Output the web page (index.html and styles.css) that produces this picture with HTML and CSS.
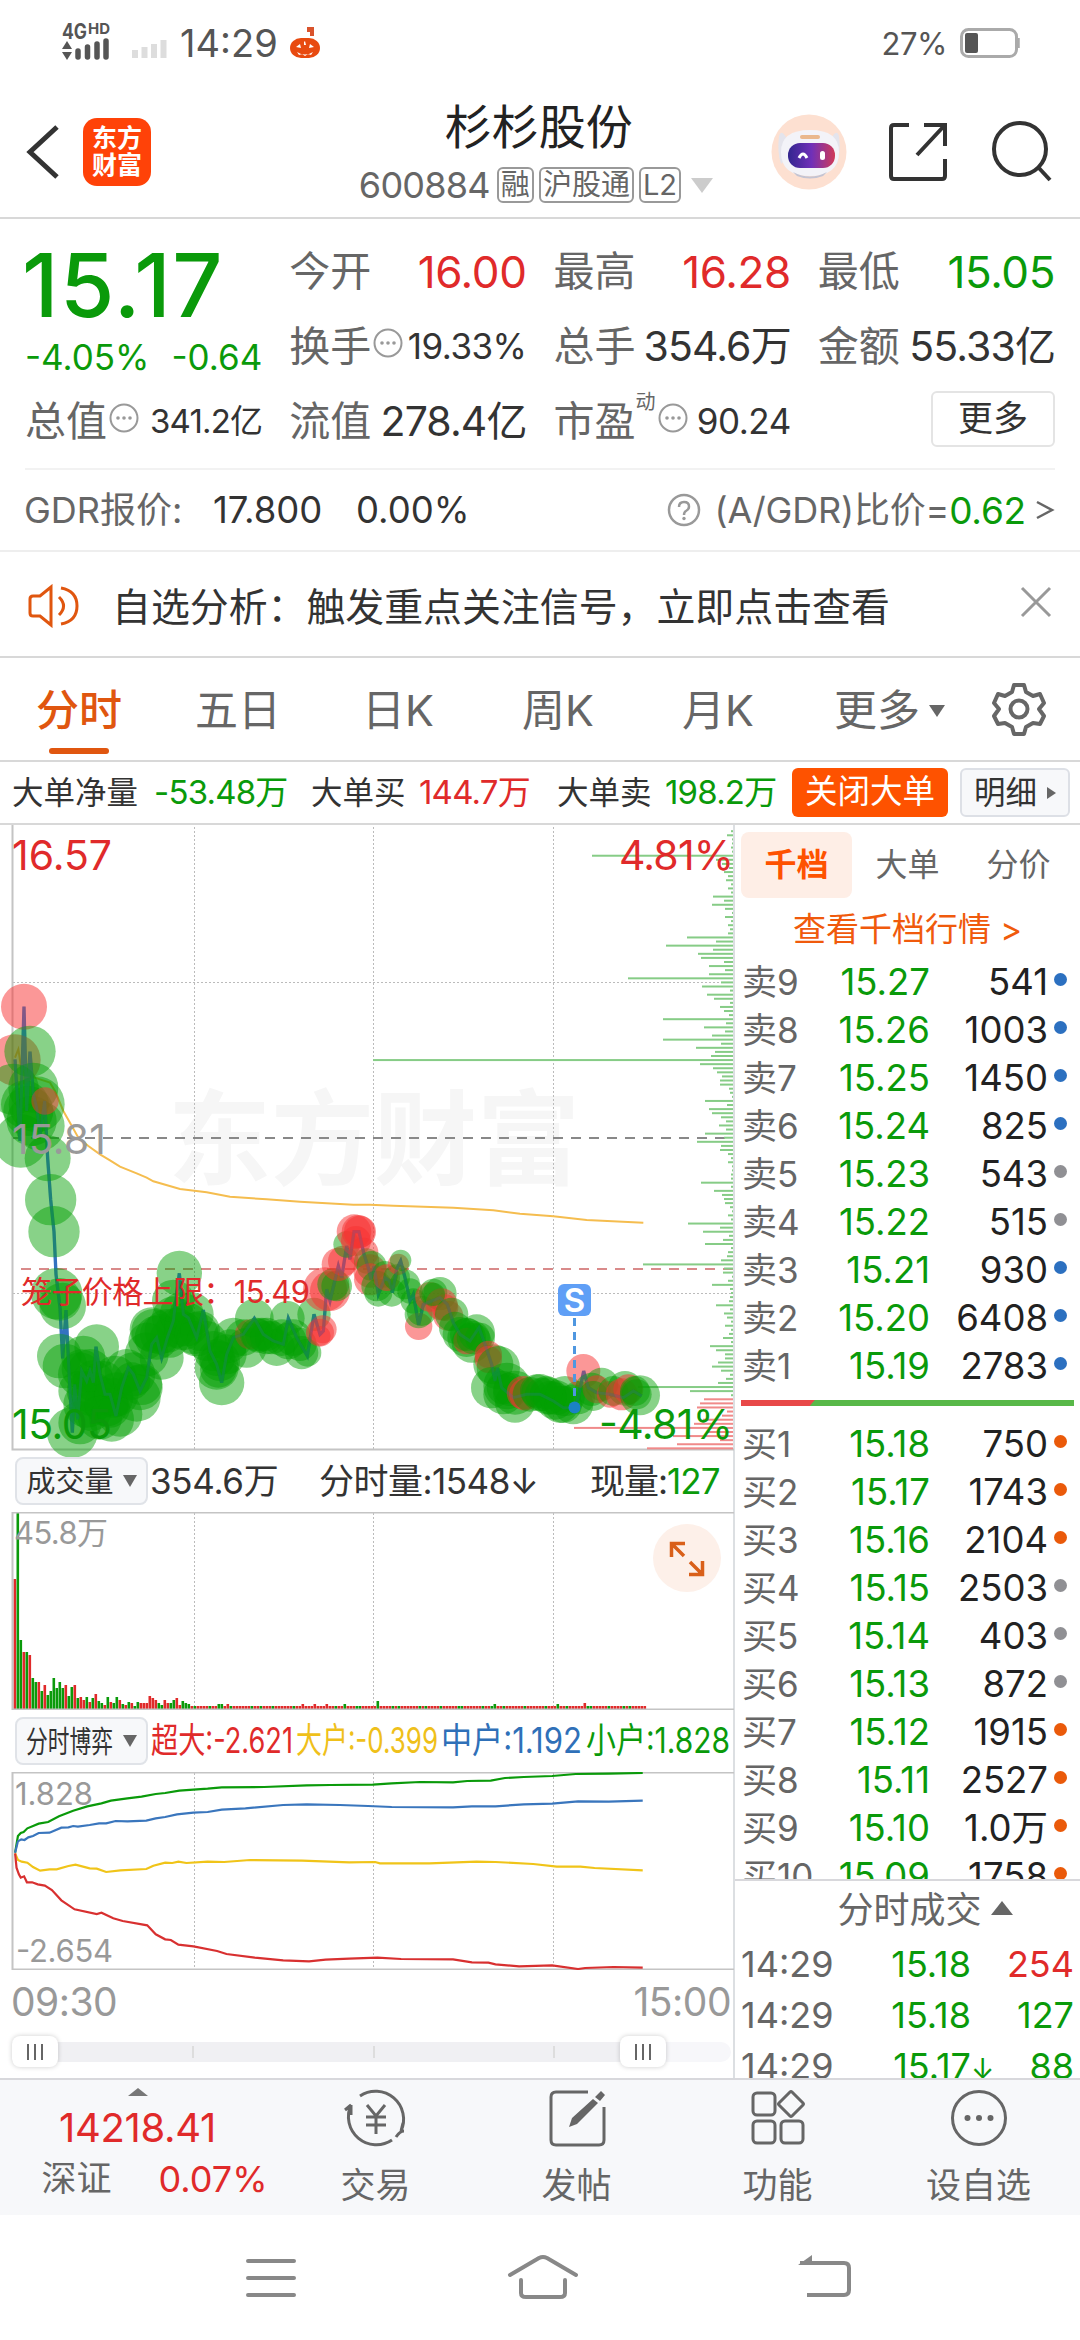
FILE: index.html
```
<!DOCTYPE html>
<html lang="zh-CN">
<head>
    <meta charset="UTF-8">
    <meta name="viewport" content="width=device-width, initial-scale=1.0">
    <title>杉杉股份 600884</title>
    <link rel="stylesheet" href="styles.css">
</head>
<body>
    <div class="status-bar">
        <svg class="signal" width="110" height="46" viewBox="0 0 110 46">
            <text x="0" y="19" font-size="21" font-weight="700" textLength="25" lengthAdjust="spacingAndGlyphs" fill="#555">4G</text>
            <text x="26" y="14" font-size="15" font-weight="700" textLength="22" lengthAdjust="spacingAndGlyphs" fill="#555">HD</text>
            <path d="M0 29l5-8 5 8zM0 32h10l-5 8z" fill="#555"/>
            <path d="M16 37v-6M25.500 37v-10M35 37v-13M44 37V21" stroke="#555" stroke-width="5.500" stroke-linecap="round"/>
            <path d="M73 38v-8M82.500 38v-11M92 38V24M101.500 38V20" stroke="#ddd" stroke-width="6"/>
        </svg>
        <span class="clock">14:29</span>
        <svg class="pumpkin" width="32" height="34" viewBox="0 0 32 34">
            <path d="M18 1h7v9h-4V6h-3z" fill="#d9532c"/>
            <rect x="1" y="12" width="30" height="20" rx="11" fill="#e84a10"/>
            <path d="M7 21l4-3 1 4zM25 21l-4-3-1 4zM15 16l1-1 1 4h-2zM8 26q8 5 16 0l-2 3-3-1-3 2-3-2-3 1z" fill="#fff"/>
        </svg>
        <span class="battery-text">27%</span>
        <svg width="60" height="30" viewBox="0 0 60 30">
            <rect x="1.500" y="1.500" width="55" height="27" rx="7" fill="none" stroke="#aaa" stroke-width="3"/>
            <path d="M58.500 10v10" stroke="#aaa" stroke-width="2.500"/>
            <rect x="5" y="5" width="13" height="20" rx="2" fill="#555"/>
        </svg>
    </div>

    <header class="header">
        <svg class="back" width="36" height="56" viewBox="0 0 36 56" fill="none" stroke="#333" stroke-width="5">
            <path d="M32 3L5 28l27 25"/>
        </svg>
        <div class="logo">东方<br>财富</div>
        <div class="title-box">
            <h1>杉杉股份</h1>
            <div class="code">
                <span class="num">600884</span><i class="tag">融</i><i class="tag">沪股通</i><i class="tag">L2</i><b class="tri-down"></b>
            </div>
        </div>
        <svg class="robot" width="76" height="76" viewBox="0 0 76 76">
            <circle cx="38" cy="38" r="37.500" fill="#fde0d1"/>
            <path d="M8 22q2-7 7 1l2 20-7 7q-4-12-2-28zM68 22q-2-7-7 1l-2 20 7 7q4-12 2-28z" fill="#e4e4ec"/>
            <path d="M10 38q0-22 29-22t29 22q0 24-29 24T10 38z" fill="#f3f3f8"/>
            <path d="M22 58q17 9 34 0l-4 4q-13 5-26 0z" fill="#c4c4d2"/>
            <rect x="29" y="21" width="20" height="4" rx="2" fill="#eab88d"/>
            <defs>
                <linearGradient id="visor"><stop offset="0" stop-color="#33268f"/><stop offset=".5" stop-color="#7030b8"/><stop offset="1" stop-color="#d03a58"/></linearGradient>
            </defs>
            <rect x="17" y="29" width="47" height="25" rx="12" fill="url(#visor)"/>
            <path d="M28 44q4-8 8 0" stroke="#fff" stroke-width="3" fill="none"/>
            <rect x="49" y="37" width="5" height="9" rx="2.500" fill="#fff"/>
        </svg>
        <svg class="share" width="62" height="62" viewBox="0 0 62 62" fill="none" stroke="#333" stroke-width="4">
            <path d="M22 4H7q-3 0-3 3v48q0 3 3 3h48q3 0 3-3V38M37 4h21v21M57 5L30 34"/>
        </svg>
        <svg class="search" width="64" height="64" viewBox="0 0 64 64" fill="none" stroke="#333" stroke-width="4">
            <circle cx="30" cy="29" r="26"/><path d="M48 47l12 13"/>
        </svg>
    </header>

    <section class="quote">
        <div class="price-box down">
            <div class="price">15.17</div>
            <div class="change"><span>-4.05%</span><span>-0.64</span></div>
        </div>
        <div class="cell"><label>今开</label><span class="up">16.00</span></div>
        <div class="cell"><label>最高</label><span class="up">16.28</span></div>
        <div class="cell"><label>最低</label><span class="down">15.05</span></div>
        <div class="cell"><label>换手<svg class="dots" viewBox="0 0 30 30"><use href="#more-dots"/></svg></label><span class="small">19.33%</span></div>
        <div class="cell"><label>总手</label><span class="mid">354.6万</span></div>
        <div class="cell"><label>金额</label><span class="mid">55.33亿</span></div>
        <div class="cell"><label>总值<svg class="dots" viewBox="0 0 30 30"><use href="#more-dots"/></svg></label><span class="small tight">341.2亿</span></div>
        <div class="cell"><label>流值</label><span class="mid">278.4亿</span></div>
        <div class="cell"><label>市盈<sup>动</sup><svg class="dots" viewBox="0 0 30 30"><use href="#more-dots"/></svg></label><span class="small">90.24</span></div>
        <div class="cell"><button class="more-btn">更多</button></div>
    </section>

    <svg class="defs" width="0" height="0">
        <symbol id="more-dots" viewBox="0 0 30 30">
            <circle cx="15" cy="15" r="13.500" fill="none" stroke="#999" stroke-width="2"/>
            <circle cx="9" cy="15" r="1.800" fill="#999"/><circle cx="15" cy="15" r="1.800" fill="#999"/><circle cx="21" cy="15" r="1.800" fill="#999"/>
        </symbol>
    </svg>

    <section class="gdr">
        <span class="gray">GDR报价:</span><span class="gdr-price">17.800</span><span class="gdr-rate">0.00%</span>
        <svg class="help" width="34" height="34" viewBox="0 0 34 34">
            <circle cx="17" cy="17" r="15" fill="none" stroke="#999" stroke-width="2.500"/>
            <path d="M12 14q0-5 5-5t5 4.500q0 3-3 4.500-2 1-2 4" fill="none" stroke="#999" stroke-width="2.500"/><circle cx="17" cy="25.500" r="1.700" fill="#999"/>
        </svg>
        <span class="gray ratio">(A/GDR)比价=</span><span class="down ratio">0.62</span>
        <svg class="arrow" width="20" height="24" viewBox="0 0 20 24"><path d="M2 4l15 8L2 20" fill="none" stroke="#666" stroke-width="2.500"/></svg>
    </section>

    <section class="notice">
        <svg width="52" height="44" viewBox="0 0 52 44" fill="none" stroke="#e0560f" stroke-width="3">
            <path d="M23 3v38L12 32H5q-3 0-3-3V15q0-3 3-3h7zM31 13q9 9 0 18M33 4q16 3 16 18T33 40"/>
        </svg>
        <p>自选分析：触发重点关注信号，立即点击查看</p>
        <svg class="close" width="32" height="32" viewBox="0 0 32 32" stroke="#999" stroke-width="3"><path d="M2 2l28 28M30 2L2 30"/></svg>
    </section>

    <nav class="tabs">
        <a class="active">分时</a><a>五日</a><a>日K</a><a>周K</a><a>月K</a><a class="more">更多<i></i></a>
        <svg width="54" height="54" viewBox="0 0 54 54" fill="none" stroke="#666" stroke-width="4" stroke-linejoin="round">
            <path d="M22 3h10l2 7 7 4 7-2 4 9-5 6 5 7-4 8-7-1-7 4-2 7H22l-2-7-7-4-7 1-4-8 5-7-5-6 4-9 7 2 7-4z"/><circle cx="27" cy="27" r="8.500"/>
        </svg>
    </nav>

    <section class="flow">
        <span class="f1">大单净量</span><span class="f2 down">-53.48万</span>
        <span class="f3">大单买</span><span class="f4 up">144.7万</span>
        <span class="f5">大单卖</span><span class="f6 down">198.2万</span>
        <button class="close-big">关闭大单</button>
        <button class="detail">明细<i></i></button>
    </section>

    <main class="main">
        <div class="charts">
            <svg class="price-chart" width="734" height="625" viewBox="0 824 734 625">
                <g font-weight="700" font-size="103" fill="#f6f6f6"><text x="168" y="1176" textLength="412">东方财富</text></g>
                <path class="grid" d="M194.500 826v622M373.500 826v622M553.500 826v622M13 981.500h720M13 1292.500h720"/>
                <path class="frame" d="M12.500 824v624.500H734"/>
                <path d="M13 1137h720" stroke="#888" stroke-width="2" stroke-dasharray="10 8"/>
                <path d="M21 1268h712" stroke="#d98a8a" stroke-width="2" stroke-dasharray="10 8"/>
                <g id="histogram"></g>
                <g transform="translate(0 960) scale(.33333)" fill="none">
                    <polyline stroke="#f5bd4f" stroke-width="6" points="45,290 55,265 65,330 90,345 120,355 150,365 165,390 190,450 210,485 235,530 265,555 300,580 330,598 360,617 410,637 440,650 460,661 540,684 620,694 690,707 800,715 900,722 1060,731 1110,731 1180,734 1360,740 1480,748 1560,758 1660,766 1760,777 1930,785"/>
                    <g id="priceLine"></g>
                    <g id="bubbles"></g>
                </g>
                <path d="M574.500 1317v80" stroke="#4f97e0" stroke-width="3" stroke-dasharray="8 6"/>
                <circle cx="574.500" cy="1406.500" r="6" fill="#1b82c4"/>
                <rect x="558" y="1283" width="33" height="32" rx="6" fill="#5f9ff6"/>
                <text x="574.500" y="1311" font-size="33" font-weight="600" text-anchor="middle" fill="#fff">S</text>
                <g font-size="41">
                    <text x="12" y="869" textLength="100" class="t-up">16.57</text>
                    <text x="619" y="869" textLength="115" class="t-up">4.81%</text>
                    <text x="12" y="1153" textLength="94" fill="#999">15.81</text>
                    <text x="12" y="1438" textLength="100" class="t-down">15.05</text>
                    <text x="599" y="1438" textLength="134" class="t-down">-4.81%</text>
                </g>
                <text x="21" y="1302" font-size="31" textLength="289" class="t-up">笼子价格上限：15.49</text>
            </svg>

            <div class="index-row">
                <button class="pick">成交量<i></i></button>
                <span class="v1">354.6万</span><span class="v2">分时量:1548↓</span><span class="v3">现量:<b class="down">127</b></span>
            </div>
            <svg class="volume-chart" width="734" height="198" viewBox="0 0 734 198">
                <path class="grid" d="M194.500 1v196M373.500 1v196M553.500 1v196"/>
                <g id="volume"></g>
                <path class="frame" d="M734 .5H12.500v197H734"/>
                <text x="14" y="32" font-size="31" textLength="94" fill="#999">45.8万</text>
                <circle cx="687" cy="46" r="34" fill="#fdf0e9"/>
                <path d="M671.500 45V31.500H685M672 32l12 12M702.500 49v13.500H689M702 62l-12-12" fill="none" stroke="#d9601a" stroke-width="3.500"/>
            </svg>

            <div class="index-row">
                <button class="pick">
                    <svg width="88" height="46" viewBox="0 0 88 46"><text x="0" y="34" font-size="30" textLength="87" lengthAdjust="spacingAndGlyphs" fill="#333">分时博弈</text></svg><i></i>
                </button>
                <svg class="legend" width="582" height="62" viewBox="151 0 582 62" font-size="35">
                    <text x="152" y="43" textLength="142" lengthAdjust="spacingAndGlyphs" class="t-up">超大:-2.621</text>
                    <text x="297" y="43" textLength="142" lengthAdjust="spacingAndGlyphs" fill="#efc01a">大户:-0.399</text>
                    <text x="442" y="43" textLength="141" lengthAdjust="spacingAndGlyphs" fill="#2f70b8">中户:1.192</text>
                    <text x="587" y="43" textLength="144" lengthAdjust="spacingAndGlyphs" class="t-down">小户:1.828</text>
                </svg>
            </div>
            <svg class="game-chart" width="734" height="198" viewBox="0 0 734 198">
                <path class="grid" d="M194.500 1v196M373.500 1v196M553.500 1v196"/>
                <path class="frame" d="M734 .5H12.500v197H734"/>
                <g font-size="31" fill="#999">
                    <text x="15" y="33" textLength="78">1.828</text>
                    <text x="16" y="190" textLength="97">-2.654</text>
                </g>
                <g class="lines" transform="scale(.4719 .33333) translate(0 -183)">
                    <polyline stroke="#0a9a0a" points="32,425 38,375 44,366 50,363 58,352 70,345 82,338 102,333 125,316 155,299 185,286 215,277 235,269 270,262 300,257 330,249 350,246 380,239 410,236 440,233 470,229 560,228 650,223 700,222 790,221 830,217 890,213 960,214 990,210 1040,209 1070,201 1110,198 1170,195 1220,189 1290,188 1362,186"/>
                    <polyline stroke="#3a76bd" points="32,425 38,391 45,385 52,387 60,379 70,375 82,366 105,365 130,350 145,349 155,345 165,347 190,342 210,337 225,337 245,330 270,331 310,329 330,322 350,318 375,310 410,305 440,303 470,296 520,292 600,282 650,280 720,282 780,285 830,288 960,289 1000,286 1050,286 1110,280 1170,278 1225,271 1290,272 1362,269"/>
                    <polyline stroke="#f0c419" points="32,427 38,447 46,452 58,455 70,468 85,479 105,475 120,475 145,465 160,461 190,472 205,473 225,483 255,478 310,474 325,464 350,455 365,456 378,452 395,456 440,452 475,453 530,447 640,449 740,454 795,453 805,457 910,457 1010,452 1050,453 1130,459 1180,467 1230,467 1260,471 1362,478"/>
                    <polyline stroke="#d83030" points="32,427 35,470 40,490 44,500 51,496 57,514 68,514 80,520 95,524 110,537 130,568 158,595 205,609 215,605 240,622 260,630 312,643 330,670 350,685 362,687 378,701 410,706 460,720 480,729 540,740 600,748 655,751 690,746 740,743 800,740 850,744 960,745 1000,754 1035,755 1050,760 1100,766 1170,763 1225,774 1240,771 1300,768 1362,770"/>
                </g>
            </svg>
            <div class="time-axis"><span>09:30</span><span>15:00</span></div>
            <div class="slider">
                <div class="range"></div>
                <i></i><i></i><i></i>
                <b class="handle"></b><b class="handle end"></b>
            </div>
        </div>

        <aside class="book">
            <div class="book-tabs"><a class="active">千档</a><a>大单</a><a>分价</a></div>
            <div class="book-link">查看千档行情 &gt;</div>
            <div class="levels" id="sell"></div>
            <div class="ratio-bar"></div>
            <div class="levels buy" id="buy"></div>
            <div class="trades">
                <div class="trades-title">分时成交<i></i></div>
                <div class="trade"><span>14:29</span><span class="down">15.18</span><span class="up">254</span></div>
                <div class="trade"><span>14:29</span><span class="down">15.18</span><span class="down">127</span></div>
                <div class="trade"><span>14:29</span><span class="down">15.17<em>↓</em></span><span class="down">88</span></div>
            </div>
        </aside>
    </main>

    <footer class="bottom">
        <div class="index">
            <i></i>
            <div class="up point">14218.41</div>
            <div class="rate"><span>深证</span><span class="up">0.07%</span></div>
        </div>
        <a>
            <svg width="66" height="60" viewBox="0 0 66 60" fill="none" stroke="#666" stroke-width="3">
                <path d="M17 8A28 28 0 0 1 58 43l2-8M53 49q4-6 8-6M49 52A28 28 0 0 1 8 17l-6 5M8 17v10"/>
                <path d="M24 17l9 11 9-11M33 28v18M23 29h20M23 37h20"/>
            </svg>交易
        </a>
        <a>
            <svg width="60" height="60" viewBox="0 0 60 60" fill="none" stroke="#666" stroke-width="3">
                <path d="M41 4H9q-5 0-5 5v43q0 5 5 5h43q5 0 5-5V19"/><path d="M22 39l3-9L46 11l5 4-21 21zM48 9l6-6 4 4-5 6z" fill="#666" stroke="none"/>
            </svg>发帖
        </a>
        <a>
            <svg width="56" height="60" viewBox="0 0 56 60" fill="none" stroke="#666" stroke-width="3">
                <rect x="3" y="5" width="22" height="22" rx="4"/><path d="M40 4q1-1 2 0l11 11q1 1 0 2L42 28q-1 1-2 0L29 17q-1-1 0-2z"/><rect x="3" y="33" width="22" height="22" rx="4"/><rect x="31" y="33" width="22" height="22" rx="4"/>
            </svg>功能
        </a>
        <a>
            <svg width="60" height="60" viewBox="0 0 60 60" fill="none" stroke="#666" stroke-width="3">
                <circle cx="30" cy="30" r="26.500"/><g fill="#666" stroke="none"><circle cx="18.500" cy="30" r="3"/><circle cx="30" cy="30" r="3"/><circle cx="41.500" cy="30" r="3"/></g>
            </svg>设自选
        </a>
    </footer>

    <div class="sysnav">
        <svg width="52" height="50" viewBox="0 0 52 50" stroke="#888" stroke-width="4" stroke-linecap="round"><path d="M3 8h46M3 25h46M3 42h46"/></svg>
        <svg class="home" width="74" height="50" viewBox="0 0 74 50" fill="none" stroke="#888" stroke-width="4" stroke-linecap="round" stroke-linejoin="round"><path d="M4 22L33 5q4-2 8 0l29 17M15 27v13q0 4 5 4h34q5 0 5-4V27"/></svg>
        <svg width="56" height="50" viewBox="0 0 56 50" fill="none" stroke="#888" stroke-width="4"><path d="M4 10h44q5 0 5 5v22q0 5-5 5H11"/><path d="M2 12L16 2v10z" fill="#888" stroke="none"/></svg>
    </div>

    <script src="chart.js"></script>
</body>
</html>
```
FILE: styles.css
```
* {
    box-sizing: border-box;
}
body {
    margin: 0;
    width: 1080px;
    height: 2340px;
    overflow: hidden;
    background: #fff;
    color: #333;
    font-family: Inter, "Noto Sans CJK SC", sans-serif;
    font-size: 34px;
    line-height: 1;
}
svg {
    display: block;
    flex: none;
}
button {
    font: inherit;
    color: inherit;
    padding: 0;
    margin: 0;
}
i, em {
    font-style: normal;
}
.defs {
    height: 0;
}
.up {
    color: #e02a2a;
}
.down {
    color: #0a9a0a;
}
.t-up {
    fill: #e02a2a;
}
.t-down {
    fill: #0a9a0a;
}

/* status bar */
.status-bar {
    height: 86px;
    padding: 0 60px 0 62px;
    display: flex;
    align-items: center;
    color: #555;
}
.signal {
    margin-top: 0;
}
.clock {
    margin-left: 8px;
    width: 106px;
    font-size: 38px;
}
.pumpkin {
    margin-left: 3px;
}
.battery-text {
    margin-left: auto;
    margin-right: 13px;
    font-size: 31px;
    letter-spacing: -0.5px;
}

/* header */
.header {
    height: 133px;
    padding: 0 26px 0 25px;
    display: flex;
    align-items: center;
    border-bottom: 2px solid #d8d8d8;
}
.logo {
    width: 68px;
    height: 68px;
    margin-left: 22px;
    padding-top: 7px;
    border-radius: 14px;
    background: #ff4208;
    color: #fff;
    font-size: 25px;
    font-weight: 700;
    line-height: 27px;
    text-align: center;
}
.title-box {
    width: 600px;
    margin-left: -12px;
    padding-left: 201px;
    height: 133px;
}
.title-box h1 {
    margin: 0;
    width: 250px;
    padding-top: 18px;
    padding-left: 105px;
    white-space: nowrap;
    font-size: 47px;
    line-height: 47px;
    font-weight: 400;
    color: #222;
}
.code {
    display: flex;
    align-items: center;
    gap: 5px;
    margin-top: 15px;
    padding-left: 19px;
    color: #666;
    height: 40px;
}
.code .num {
    font-size: 36px;
    width: 133px;
    letter-spacing: -0.8px;
}
.tag {
    height: 36px;
    padding: 0 2px;
    border: 2px solid #999;
    border-radius: 6px;
    font-size: 29px;
    line-height: 31px;
}
.tri-down {
    margin-left: 5px;
    border: 11px solid transparent;
    border-top: 15px solid #ccc;
    border-bottom: 0;
}
.robot {
    margin-left: 33px;
}
.share {
    margin-left: 40px;
}
.search {
    margin-left: 41px;
}

/* quote */
.quote {
    height: 251px;
    margin: 0 25px;
    padding-top: 15px;
    display: grid;
    grid-template-columns: repeat(4, 1fr);
    grid-template-rows: repeat(3, 75px);
    column-gap: 27px;
    border-bottom: 2px solid #f2f2f2;
}
.price-box {
    grid-row: span 2;
}
.price {
    margin-top: 10px;
    font-size: 88px;
    line-height: 82px;
    font-weight: 500;
    letter-spacing: 1.5px;
    margin-left: -3px;
}
.change {
    display: flex;
    justify-content: space-between;
    margin-top: 14px;
    font-size: 35px;
}
.cell {
    display: flex;
    align-items: center;
    justify-content: space-between;
    white-space: nowrap;
    font-size: 44px;
    letter-spacing: -0.4px;
}
.cell label {
    display: flex;
    align-items: center;
    color: #666;
    font-size: 41px;
    letter-spacing: 0;
}
.cell sup {
    align-self: flex-start;
    font-size: 20px;
    line-height: 20px;
    margin-top: -9px;
}
.dots {
    width: 30px;
    height: 30px;
    margin: -8px 0 0 2px;
}
.cell .mid {
    font-size: 41px;
    letter-spacing: -0.9px;
}
.cell .small {
    font-size: 35px;
    letter-spacing: -0.5px;
}
.cell .tight {
    font-size: 33px;
    letter-spacing: -0.8px;
}
.more-btn {
    margin-left: auto;
    margin-top: -6px;
    width: 124px;
    height: 56px;
    border: 2px solid #e4e4e4;
    border-radius: 6px;
    background: #fff;
    font-size: 35px;
}

/* gdr */
.gdr {
    height: 82px;
    padding: 0 25px 0 24px;
    display: flex;
    align-items: center;
    border-bottom: 2px solid #eee;
    font-size: 37px;
}
.gray {
    color: #666;
    font-size: 36px;
}
.gdr > :first-child {
    width: 189px;
}
.gdr-price {
    width: 143px;
}
.gdr-price, .gdr-rate {
    font-size: 36.5px;
}
.help {
    margin-left: auto;
    margin-right: 14px;
}
.arrow {
    margin-left: 9px;
}
.ratio {
    letter-spacing: -0.2px;
}

/* notice */
.notice {
    height: 106px;
    padding: 6px 27px 0 28px;
    display: flex;
    align-items: center;
    border-bottom: 2px solid #d8d8d8;
}
.notice p {
    margin: 0 0 0 32px;
    font-size: 38.9px;
}
.notice > :first-child {
    margin-top: -2px;
}
.close {
    margin: -10px 1px 0 auto;
}

/* tabs */
.tabs {
    height: 104px;
    padding-right: 34px;
    display: flex;
    align-items: center;
    border-bottom: 2px solid #d8d8d8;
    color: #666;
    font-size: 43px;
}
.tabs a {
    width: 160px;
    height: 102px;
    padding-top: 3px;
    display: flex;
    align-items: center;
    justify-content: center;
}
.tabs .active {
    position: relative;
    width: 158px;
    color: #e0560f;
    font-weight: 500;
}
.tabs .active::after {
    content: "";
    position: absolute;
    left: 49px;
    bottom: 6px;
    width: 60px;
    height: 6px;
    border-radius: 3px;
    background: #e0560f;
}
.tabs .more {
    width: 180px;
    padding-left: 3px;
}
.tabs .more i {
    margin-left: 9px;
    border: 8px solid transparent;
    border-top: 12px solid #666;
    border-bottom: 0;
}
.tabs svg {
    margin-left: auto;
}

/* big order flow */
.flow {
    height: 63px;
    padding-left: 12px;
    display: flex;
    align-items: center;
    border-bottom: 2px solid #d8d8d8;
    font-size: 31.5px;
    white-space: nowrap;
}
.f1 {
    width: 142px;
}
.f2 {
    width: 157px;
}
.f3, .f5 {
    width: 108px;
}
.f4 {
    width: 138px;
}
.f6 {
    width: 127px;
}
.f2, .f4, .f6 {
    font-size: 33px;
    letter-spacing: -0.8px;
}
.close-big {
    width: 156px;
    height: 49px;
    border: 0;
    border-radius: 6px;
    background: #fe5200;
    color: #fff;
    font-size: 32.5px;
}
.detail {
    width: 110px;
    height: 49px;
    margin-left: 12px;
    display: flex;
    align-items: center;
    justify-content: center;
    border: 2px solid #dde0e6;
    border-radius: 6px;
    background: #f7f8fa;
}
.detail i {
    margin-left: 10px;
    border: 6px solid transparent;
    border-left: 9px solid #666;
    border-right: 0;
}

/* charts */
.main {
    height: 1255px;
    display: flex;
    border-bottom: 2px solid #d8d8dc;
}
.charts {
    width: 735px;
    flex: none;
    border-right: 2px solid #dcdfe2;
}
.price-chart {
    overflow: visible;
}
.grid {
    fill: none;
    stroke: #bbb;
    stroke-dasharray: 2 2;
}
.frame {
    fill: none;
    stroke: #c4c4c4;
    stroke-width: 2;
}
.lines polyline {
    fill: none;
    stroke-width: 2.2px;
    vector-effect: non-scaling-stroke;
}
.index-row {
    position: relative;
    height: 62px;
    padding-left: 15px;
    display: flex;
    align-items: center;
    white-space: nowrap;
}
.pick {
    width: 133px;
    height: 48px;
    margin-right: 2px;
    display: flex;
    align-items: center;
    justify-content: center;
    border: 2px solid #e0e3e8;
    border-radius: 8px;
    background: #f7f8fa;
    font-size: 29px;
}
.pick i {
    margin-left: 9px;
    border: 7px solid transparent;
    border-top: 12px solid #666;
    border-bottom: 0;
}
.v1 {
    width: 169px;
    font-size: 35px;
    letter-spacing: -0.3px;
}
.v2 {
    width: 271px;
    font-size: 35px;
    letter-spacing: -0.5px;
}
.v3 {
    font-size: 35px;
    letter-spacing: -1px;
}
.v3 b {
    font-weight: 400;
}
.time-axis {
    height: 62px;
    padding: 0 2px 0 11px;
    display: flex;
    align-items: center;
    justify-content: space-between;
    color: #999;
    font-size: 39px;
    letter-spacing: -0.5px;
}
.slider {
    position: relative;
    height: 20px;
    margin: 10px 2px 0 12px;
    display: flex;
    justify-content: space-evenly;
    align-items: center;
    border-radius: 10px;
    background: #f7f7fa;
}
.range {
    position: absolute;
    left: 0;
    top: 0;
    width: 630px;
    height: 20px;
    background: #f0f0f3;
}
.slider i {
    position: relative;
    left: 2px;
    width: 2px;
    height: 12px;
    background: #ddd;
}
.handle {
    position: absolute;
    left: 0;
    top: -6px;
    width: 46px;
    height: 31px;
    border-radius: 8px;
    background: linear-gradient(90deg, #666 2px, transparent 2px 7px, #666 7px 9px, transparent 9px 14px, #666 14px) center / 16px 16px no-repeat #fff;
    box-shadow: 0 0 5px rgba(0, 0, 0, 0.2);
}
.handle.end {
    left: 608px;
}

/* order book */
.book {
    flex: 1;
    display: flex;
    flex-direction: column;
    height: 1253px;
    overflow: hidden;
    font-size: 36px;
}
.book-tabs {
    height: 73px;
    padding: 7px 0 0 6px;
    display: flex;
    flex: none;
    color: #666;
    font-size: 32px;
}
.book-tabs a {
    width: 111px;
    height: 66px;
    line-height: 66px;
    text-align: center;
    border-radius: 8px;
}
.book-tabs .active {
    background: #feeee6;
    color: #fe5200;
    font-weight: 700;
}
.book-link {
    flex: none;
    height: 60px;
    line-height: 62px;
    text-align: center;
    color: #f05a0c;
    font-size: 33px;
}
.levels {
    height: 432px;
    flex: none;
}
.levels.buy {
    height: 459px;
    overflow: hidden;
}
.level {
    height: 48px;
    padding: 0 13px 0 7px;
    display: grid;
    grid-template-columns: 80px 108px 118px 1fr;
    align-items: center;
    text-align: right;
    color: #222;
}
.level span {
    font-size: 36.5px;
}
.level span:first-child {
    color: #666;
    text-align: left;
    font-size: 35px;
    white-space: nowrap;
}
.level i {
    width: 13px;
    height: 13px;
    margin: -5px 0 0 auto;
    border-radius: 50%;
    background: #909094;
}
.level .blue {
    background: #2c70c0;
}
.level .orange {
    background: #ea5a0a;
}
.ratio-bar {
    height: 6px;
    flex: none;
    margin: 10px 6px 14px;
    background: linear-gradient(130deg, #e84848 56px, #58b848 57px);
}
.trades {
    border-top: 2px solid #d8d8dc;
}
.trades-title {
    height: 57px;
    padding-left: 35px;
    display: flex;
    align-items: center;
    justify-content: center;
    color: #666;
}
.trades-title i {
    margin: -4px 0 0 9px;
    border: 11px solid transparent;
    border-bottom: 14px solid #666;
    border-top: 0;
}
.trade {
    height: 51px;
    padding: 0 6px 0 6px;
    display: grid;
    grid-template-columns: 100px 130px 1fr;
    align-items: center;
    text-align: right;
}
.trade span:first-child {
    color: #666;
    text-align: left;
}
.trade em {
    display: inline-block;
    width: 0;
    font-size: 28px;
}

/* bottom */
.bottom {
    height: 135px;
    display: flex;
    background: #f7f8fa;
    color: #666;
}
.index {
    width: 275px;
    padding-top: 8px;
    display: flex;
    flex-direction: column;
    align-items: center;
}
.index > i {
    border: 10px solid transparent;
    border-bottom: 8px solid #777;
    border-top: 0;
}
.point {
    margin-top: 12px;
    font-size: 40px;
    letter-spacing: -0.3px;
}
.rate {
    width: 226px;
    margin-top: 13px;
    margin-left: 34px;
    display: flex;
    justify-content: space-between;
    font-size: 36px;
}
.rate span:first-child {
    font-size: 35px;
}
.bottom a {
    width: 201px;
    padding-top: 8px;
    display: flex;
    flex-direction: column;
    align-items: center;
    font-size: 35px;
    gap: 20px;
}

/* system navigation */
.sysnav {
    height: 126px;
    padding: 0 228px 0 245px;
    display: flex;
    align-items: center;
    justify-content: space-between;
}
.sysnav .home {
    margin-right: 7px;
}
```
FILE: chart.js
```
const SVG = 'http://www.w3.org/2000/svg';
const GREEN = '#0a9a0a';
const RED = '#e02a2a';

function add(parent, tag, attrs) {
    const el = document.createElementNS(SVG, tag);
    for (const key in attrs) el.setAttribute(key, attrs[key]);
    parent.appendChild(el);
}

// volume by price, one bar per 0.01
const histogram = [
    2,6,1,1,2,1,141,17,11,4,9,5,7,2,5,2,20,9,21,8,1,8,2,5,3,5,46,17,67,20,35,32,9,24,8,24,105,12,31,3,
    26,19,3,13,9,4,70,7,29,8,21,70,12,37,18,22,360,33,20,16,11,13,13,4,3,1,28,6,24,21,12,7,14,7,28,9,36,12,13,5,
    2,5,1,1,2,2,32,2,19,11,9,8,3,1,5,2,45,13,30,4,10,28,2,5,6,12,90,9,10,1,5,21,3,2,3,4,17,3,9,6,
    2,8,2,4,10,2,23,17,8,8,15,21,12,3,7,15,95,43,2,29,33,36,6,11,30,39,159,26,60,13,56,86
];
const histogramBox = document.getElementById('histogram');
histogram.forEach((w, i) => {
    add(histogramBox, 'rect', {
        x: 733 - w, y: 829.2 + i * 4.087, width: w, height: 2,
        fill: i < 139 ? '#86cc86' : '#f08a8a'
    });
});

const price = '45,295 60,540 72,137 80,450 90,272 100,400 110,440 120,520 134,420 143,592 152,716 162,812 168,940 180,1040 188,1192 198,1047 208,1250 217,1415 224,1270 233,1375 245,1230 260,1260 270,1230 280,1265 288,1157 300,1240 315,1300 330,1300 348,1365 365,1280 385,1220 400,1240 420,1290 440,1250 455,1150 470,1130 485,1190 502,1130 520,1080 538,937 550,1060 565,1070 590,1130 610,1047 630,1170 650,1210 665,1265 680,1180 700,1130 730,1120 763,1072 790,1120 820,1140 850,1150 865,1072 890,1130 922,1185 942,1060 960,1120 970,1110 980,985 990,1020 1015,915 1025,950 1040,855 1050,895 1062,812 1077,812 1092,880 1105,920 1113,955 1122,915 1135,1000 1155,950 1168,960 1177,995 1190,925 1202,900 1215,950 1230,1020 1240,1000 1256,1092 1270,1030 1295,1020 1320,1010 1342,1030 1360,1085 1380,1120 1410,1140 1437,1100 1455,1150 1475,1210 1485,1260 1492,1220 1505,1280 1540,1310 1580,1300 1620,1300 1660,1320 1690,1340 1723,1340 1735,1310 1751,1230 1765,1280 1790,1295 1830,1300 1870,1310 1900,1290 1925,1305';
const priceBox = document.getElementById('priceLine');
add(priceBox, 'polyline', { points: price, stroke: '#3472c0', 'stroke-width': 10 });

// big orders: colour, x, y, radius
const bubbles = `
r72,137,69 r45,297,77 g90,271,77 g40,385,77 g100,380,75 g75,430,72 g110,430,84 g85,450,75 g95,480,75 g120,495,74 g62,540,80 r135,420,41
g143,592,69 g152,716,77 g162,812,77 g170,998,77 g188,1035,70 g180,1015,64
g178,1185,67 g195,1215,67 g240,1240,66 g250,1190,66 g290,1157,67 g270,1230,66 g235,1290,60 g217,1415,76 g240,1385,65 g260,1330,70
g245,1225,60 g280,1260,62 g300,1310,64 g330,1340,60 g260,1290,60 g310,1260,60 g275,1350,60 g340,1310,60
g280,1300,66 g300,1370,66 g320,1330,66 g335,1375,67 g350,1300,66 g360,1360,67 g345,1250,66 g380,1230,66 g400,1240,66 g420,1280,68
g410,1310,72 g425,1270,62 g440,1180,66 g455,1105,66 g460,1110,66 g470,1130,66 g485,1190,66 g500,1110,66 g520,1070,64 g538,937,68
g480,1120,60 g510,1130,60 g530,1100,60 g550,1110,58 g395,1260,56 g440,1140,55
g520,1020,64 g545,1060,66 g560,1090,66 g575,1060,66 g590,1120,66 g600,1110,60 g620,1140,60 g640,1170,60 g650,1220,66 g665,1265,68
g660,1200,60 g680,1180,60 g700,1130,60 g655,1225,55 g650,1190,55 g690,1155,50 g580,1130,50 g730,1130,55 r750,1120,45 g740,1160,60
g763,1072,58 g770,1120,50 g785,1120,50 g800,1120,50 g775,1125,50 g800,1130,50
g815,1130,50 g830,1160,55 g845,1130,55 g862,1072,52 g865,1140,55 g880,1130,55 g900,1150,50 g905,1175,50 g922,1175,42 g942,1060,50
r960,1115,42 r968,1105,42 r962,1125,30 r975,985,66 r990,990,60 g1000,970,48 g1010,975,46 r1015,910,50 r1030,900,46 g1040,850,40
r1062,812,52 r1075,812,50 r1068,840,45 g1100,900,38 r1110,930,50 r1080,812,48 r1090,875,45 g1115,915,45 r1110,955,48 g1135,995,42
g1130,975,46 g1155,940,40 g1175,995,42 r1160,950,40 g1190,950,40 r1195,910,32 g1202,898,32 g1215,970,45 g1230,990,38 g1240,1020,38
r1256,1096,41 g1256,1060,42 g1265,1050,45 r1290,1008,45 g1300,995,42 g1320,998,50 r1325,1030,48 r1335,1040,40 r1345,1065,45
g1300,1000,35 g1355,1060,50 g1365,1100,48 g1380,1120,52 g1400,1130,58 g1415,1145,60 r1400,1140,40 g1430,1115,55 g1440,1130,45
g1420,1130,50 g1400,1120,50 g1480,1210,60 r1465,1180,41 r1465,1195,41 g1495,1220,65 g1475,1280,62 g1510,1300,60 g1520,1275,70 g1545,1325,60
g1545,1295,66 g1510,1280,50 g1530,1285,50 r1570,1295,50 r1575,1300,48 g1590,1300,52 g1620,1295,56 g1625,1300,50 g1645,1305,56 g1665,1320,56
g1610,1290,50 g1640,1295,50 g1670,1310,52
g1680,1330,56 g1690,1330,56 g1695,1305,60 g1720,1330,60 g1735,1310,50 g1650,1310,50 r1750,1230,51 g1775,1285,50 g1805,1270,50
r1790,1285,42 g1780,1305,45 r1830,1300,40 g1840,1290,45 g1875,1282,52 r1865,1300,48 r1885,1285,45 g1905,1290,45 g1920,1303,60 g1910,1300,45`;
const bubbleBox = document.getElementById('bubbles');
bubbles.trim().split(/\s+/).forEach(item => {
    const [x, y, r] = item.slice(1).split(',');
    add(bubbleBox, 'circle', {
        cx: x, cy: y, r: r,
        fill: item[0] === 'g' ? '#03a003' : '#f83030',
        'fill-opacity': item[0] === 'g' ? 0.47 : 0.5
    });
});
add(bubbleBox, 'polyline', { points: price, stroke: '#3472c0', 'stroke-width': 9, 'stroke-opacity': 0.22 });

// volume per minute
const volume = 'r130 g196 g69 r57 g57 r54 g31 g27 r27 g18 r24 g14 g18 g31 g21 g27 g21 r24 g13 g22 r24 g11 r12 r9 g12 r7 g11 r15 g8 g6 r4 g12 r7 g6 g12 r9 g5 r4 g7 r6 g3 g7 r6 r6 r6 r13 r11 r9 g6 g4 r9 r6 g6 g9 r11 r4 g8 g6 g5'.split(' ');
const spikes = { 68: 'g5', 69: 'g5', 71: 'r5', 96: 'r5', 100: 'r5', 104: 'r5', 110: 'g5', 121: 'g8', 160: 'g5', 181: 'g5', 190: 'r6' };
for (let i = volume.length; i < 211; i++) {
    volume.push(spikes[i] || (i % 7 === 2 || i % 11 === 5 ? 'g3' : 'r3'));
}
const volumeBox = document.getElementById('volume');
volume.forEach((item, i) => {
    const h = +item.slice(1);
    add(volumeBox, 'rect', { x: 13.5 + i * 3, y: 197 - h, width: 2.6, height: h, fill: item[0] === 'g' ? GREEN : RED });
});

// order book
const sell = [
    ['卖9', '15.27', '541', 'blue'], ['卖8', '15.26', '1003', 'blue'], ['卖7', '15.25', '1450', 'blue'],
    ['卖6', '15.24', '825', 'blue'], ['卖5', '15.23', '543', ''], ['卖4', '15.22', '515', ''],
    ['卖3', '15.21', '930', 'blue'], ['卖2', '15.20', '6408', 'blue'], ['卖1', '15.19', '2783', 'blue']
];
const buy = [
    ['买1', '15.18', '750', 'orange'], ['买2', '15.17', '1743', 'orange'], ['买3', '15.16', '2104', 'orange'],
    ['买4', '15.15', '2503', ''], ['买5', '15.14', '403', ''], ['买6', '15.13', '872', ''],
    ['买7', '15.12', '1915', 'orange'], ['买8', '15.11', '2527', 'orange'], ['买9', '15.10', '1.0万', 'orange'],
    ['买10', '15.09', '1758', 'orange']
];
function renderLevels(id, rows) {
    document.getElementById(id).innerHTML = rows.map(([name, cost, count, dot]) =>
        `<div class="level"><span>${name}</span><span class="down">${cost}</span><span>${count}</span><i class="${dot}"></i></div>`
    ).join('');
}
renderLevels('sell', sell);
renderLevels('buy', buy);
```
